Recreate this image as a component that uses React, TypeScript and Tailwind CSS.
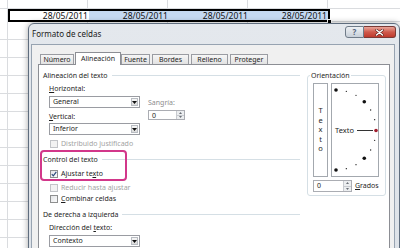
import type { ReactNode } from "react";

const COLS = ["w-[8px]", "w-[80px]", "w-[80px]", "w-[80px]", "w-[80px]", "w-[80px]"];

function GridRow({ tall }: { tall?: boolean }) {
  return (
    <div className={`flex ${tall ? "h-[18px]" : "h-[9px]"}`}>
      {COLS.map((w, i) => (
        <div key={i} className={`${w} shrink-0 border-b border-r border-[#dadcdf]`} />
      ))}
    </div>
  );
}

function DateCell({ blue, wide }: { blue?: boolean; wide?: boolean }) {
  return (
    <div
      className={`flex items-center justify-end pr-[1px] text-[8.5px] leading-[9px] text-[#111] ${
        wide ? "w-[80px]" : "w-[79px]"
      } ${blue ? "bg-[#c5d9f1]" : "bg-white"}`}
    >
      28/05/2011
    </div>
  );
}

function Sheet() {
  return (
    <div className="flex flex-col">
      <GridRow />
      <div className="flex h-[13px]">
        <div className="w-[8px] shrink-0 border-r border-[#dadcdf]" />
        <div className="relative flex w-[322px] shrink-0 border-2 border-black">
          <DateCell />
          <DateCell blue wide />
          <DateCell blue wide />
          <DateCell blue />
          <div className="absolute -bottom-[4px] -right-[4px] h-[5px] w-[5px] border border-white bg-black" />
        </div>
        <div className="flex-1 border-b border-[#dadcdf]" />
      </div>
      {Array.from({ length: 13 }).map((_, i) => (
        <GridRow key={i} tall />
      ))}
    </div>
  );
}

function Tab({ children, active, className = "" }: { children: ReactNode; active?: boolean; className?: string }) {
  if (active) {
    return (
      <div
        className={`relative z-10 -mb-[1px] h-[13px] shrink-0 border border-b-0 border-[#8c8e94] bg-white pt-[1px] text-center leading-[9px] ${className}`}
      >
        {children}
      </div>
    );
  }
  return (
    <div
      className={`h-[10px] shrink-0 border border-b-0 border-[#9a9ca2] bg-gradient-to-b from-[#f6f6f6] to-[#e2e2e2] text-center leading-[9px] ${className}`}
    >
      {children}
    </div>
  );
}

function Header({ children, className = "" }: { children: ReactNode; className?: string }) {
  return (
    <div className={`flex h-[9px] items-center gap-[4px] leading-[9px] ${className}`}>
      <span className="shrink-0">{children}</span>
      <div className="h-px flex-1 bg-[#d5dfe5]" />
    </div>
  );
}

function Arrow() {
  return (
    <svg width="5" height="3" viewBox="0 0 5 3">
      <path d="M0 0h5L2.5 3z" fill="#111" />
    </svg>
  );
}

function Combo({ children, className = "" }: { children: ReactNode; className?: string }) {
  return (
    <div className={`flex h-[12px] w-[91px] border border-[#9a9ca2] bg-white ${className}`}>
      <span className="flex-1 pl-[3px] leading-[10px]">{children}</span>
      <div className="m-[1px] flex w-[7px] items-center justify-center border border-[#b8bcc2] bg-gradient-to-b from-[#f7f7f7] to-[#dcdcdc]">
        <Arrow />
      </div>
    </div>
  );
}

function Spin({ value, className = "" }: { value: string; className?: string }) {
  return (
    <div className={`flex border border-[#abadb3] bg-white ${className}`}>
      <span className="flex-1 pl-[3px] leading-[9px]">{value}</span>
      <div className="flex w-[8px] flex-col border-l border-[#c8cbd0] bg-[#eceef0]">
        <div className="flex flex-1 items-center justify-center border-b border-[#c8cbd0]">
          <svg width="3" height="2" viewBox="0 0 3 2">
            <path d="M0 2h3L1.5 0z" fill="#6a6f76" />
          </svg>
        </div>
        <div className="flex flex-1 items-center justify-center">
          <svg width="3" height="2" viewBox="0 0 3 2">
            <path d="M0 0h3L1.5 2z" fill="#6a6f76" />
          </svg>
        </div>
      </div>
    </div>
  );
}

function Check({
  children,
  checked,
  disabled,
  className = "",
}: {
  children: ReactNode;
  checked?: boolean;
  disabled?: boolean;
  className?: string;
}) {
  return (
    <div className={`ml-[7px] flex h-[9px] items-center leading-[9px] ${className}`}>
      <div
        className={`flex h-[8px] w-[8px] items-center justify-center border ${
          disabled
            ? "border-[#c2c4c8] bg-[#f2f2f2]"
            : "border-[#8e8f8f] bg-gradient-to-br from-[#e2e4e7] to-[#fbfbfb]"
        }`}
      >
        {checked && (
          <svg width="6" height="6" viewBox="0 0 6 6">
            <path d="M0.8 3.2 2.3 4.8 5.3 0.8" fill="none" stroke="#2b4a7c" strokeWidth="1.2" />
          </svg>
        )}
      </div>
      <span className={`ml-[3px] ${disabled ? "text-[#a3a3a3]" : ""}`}>{children}</span>
    </div>
  );
}

function Orientation() {
  const small = [75, 60, 30, 15, -15, -30, -60, -75];
  const big = [90, 45, -45, -90];
  const pt = (deg: number) => {
    const r = (deg * Math.PI) / 180;
    return { x: 4 + 40 * Math.cos(r), y: 46 - 40 * Math.sin(r) };
  };
  return (
    <fieldset className="ml-[7px] w-[79px] shrink-0 self-start rounded-[3px] border border-[#d5dfe5] pb-[3px]">
      <legend className="ml-[2px] px-[1px] leading-[9px]">Orientación</legend>
      <div className="ml-[5px] mt-[3px] flex h-[94px]">
        <div className="flex w-[15px] flex-col items-center justify-center border border-[#a3a8ae] bg-white text-[7.5px] leading-[9.4px]">
          {"Texto".split("").map((c, i) => (
            <span key={i}>{c}</span>
          ))}
        </div>
        <div className="ml-[3px] w-[48px] border border-[#a3a8ae] bg-white">
          <svg width="46" height="92" viewBox="0 0 46 92">
            {small.map((d) => {
              const p = pt(d);
              return <circle key={d} cx={p.x} cy={p.y} r="0.7" fill="#222" />;
            })}
            {big.map((d) => {
              const p = pt(d);
              return <circle key={d} cx={p.x} cy={p.y} r="1.8" fill="#111" />;
            })}
            <text x="3" y="48.5" fontSize="7.5" fill="#222" fontFamily="Noto Sans, sans-serif">
              Texto
            </text>
            <path d="M25 46.5h16" stroke="#333" strokeWidth="1" />
            <circle cx="44" cy="46.5" r="1.8" fill="#a01c2c" />
          </svg>
        </div>
      </div>
      <div className="ml-[5px] mt-[3px] flex h-[12px] items-center">
        <Spin value="0" className="h-[12px] w-[39px]" />
        <span className="ml-[3px]">
          <span className="underline">G</span>rados
        </span>
      </div>
    </fieldset>
  );
}

function Dialog() {
  return (
    <div className="absolute left-[28px] top-[23px] h-[240px] w-[372px] rounded-t-[6px] border border-[#5f6d7e] bg-gradient-to-b from-[#e4e8ed] to-[#dde2e8] shadow-[0_0_6px_rgba(0,0,0,0.35)]">
      <div className="flex h-[20px] items-start justify-between">
        <span className="pl-[3px] pt-[5px] text-[8px] leading-[10px] text-[#1a1a1a]">Formato de celdas</span>
        <div className="mr-[3px] mt-[2px] flex">
          <div className="flex h-[12px] w-[19px] items-center justify-center rounded-l-[3px] border border-[#6f7b88] bg-gradient-to-b from-[#eef1f4] to-[#c7cfd8] text-[8px] font-bold leading-none text-[#56657a]">
            ?
          </div>
          <div className="flex h-[12px] w-[32px] items-center justify-center rounded-r-[3px] border border-l-0 border-[#7a3a35] bg-gradient-to-b from-[#e8a499] via-[#cf5a4c] to-[#c0392c]">
            <svg width="9" height="7" viewBox="0 0 9 7">
              <path d="M1.5 1 7.5 6M7.5 1 1.5 6" stroke="#5a1e18" strokeWidth="2.6" strokeLinecap="round" />
              <path d="M1.5 1 7.5 6M7.5 1 1.5 6" stroke="#fff" strokeWidth="1.5" strokeLinecap="round" />
            </svg>
          </div>
        </div>
      </div>
      <div className="ml-[2px] mr-[4px] h-[230px] border border-[#97a3b1] bg-[#f0f0f0] pl-[6px] pt-[7px]">
        <div className="flex h-[12px] items-end pl-[2px]">
          <Tab className="w-[34px]">Número</Tab>
          <Tab active className="ml-[1px] w-[46px]">
            Alineación
          </Tab>
          <Tab className="w-[29px]">Fuente</Tab>
          <Tab className="ml-[2px] w-[37px]">Bordes</Tab>
          <Tab className="ml-[2px] w-[37px]">Relleno</Tab>
          <Tab className="ml-[2px] w-[38px]">Proteger</Tab>
        </div>
        <div className="relative flex h-[200px] w-[352px] border border-[#8c8e94] bg-white pl-[4px] pt-[6px]">
          <div className="flex w-[257px] shrink-0 flex-col">
            <Header>Alineación del texto</Header>
            <div className="ml-[6px] mt-[4px] flex">
              <div className="flex w-[91px] flex-col">
                <span className="leading-[9px]">
                  <span className="underline">H</span>orizontal:
                </span>
                <Combo className="mt-[3px]">General</Combo>
                <span className="mt-[4px] leading-[9px]">
                  <span className="underline">V</span>ertical:
                </span>
                <Combo className="mt-[2px]">Inferior</Combo>
              </div>
              <div className="ml-[8px] flex flex-col pt-[14px]">
                <span className="leading-[9px] text-[#8d8d8d]">Sangría:</span>
                <Spin value="0" className="mt-[3px] h-[10px] w-[37px]" />
              </div>
            </div>
            <Check disabled className="mt-[4px]">
              Distribuido justificado
            </Check>
            <Header className="mt-[7px]">Control del texto</Header>
            <Check checked className="mt-[5px]">
              Ajustar te<span className="underline">x</span>to
            </Check>
            <Check disabled className="mt-[5px]">
              Reducir hasta ajustar
            </Check>
            <Check className="mt-[2px]">
              <span className="underline">C</span>ombinar celdas
            </Check>
            <Header className="mt-[7px]">De derecha a izquierda</Header>
            <span className="ml-[6px] mt-[4px] leading-[9px]">
              Dirección del <span className="underline">t</span>exto:
            </span>
            <Combo className="ml-[6px] mt-[3px]">Contexto</Combo>
          </div>
          <Orientation />
          <div className="absolute left-[1px] top-[85px] h-[31px] w-[87px] rounded-[4px] border-2 border-[#d2378a]" />
        </div>
      </div>
    </div>
  );
}

export default function App() {
  return (
    <div className="relative h-[248px] w-[400px] overflow-hidden bg-white font-['Noto_Sans',sans-serif] text-[7px] text-[#1e1e1e]">
      <Sheet />
      <Dialog />
    </div>
  );
}
